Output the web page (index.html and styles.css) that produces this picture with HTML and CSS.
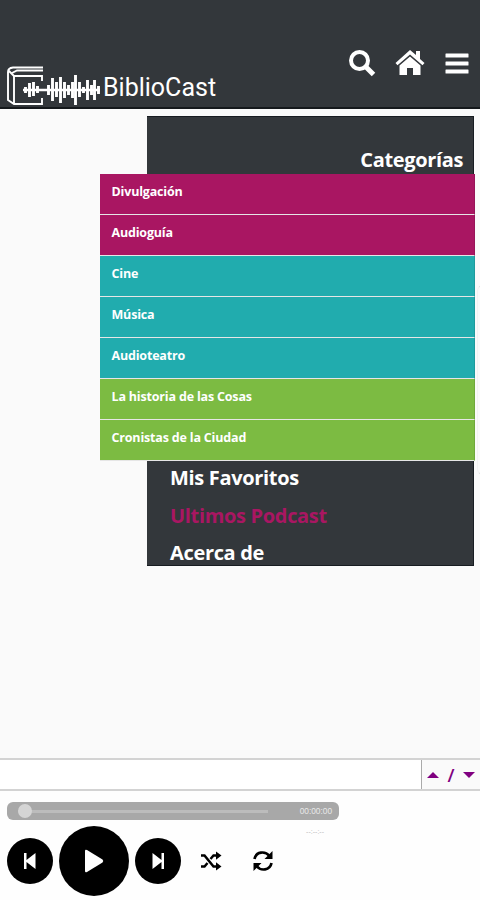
FILE: index.html
```
<!DOCTYPE html>
<html lang="es">
<head>
    <meta charset="UTF-8">
    <meta name="viewport" content="width=device-width, initial-scale=1.0">
    <title>BiblioCast</title>
    <link rel="stylesheet" href="styles.css">
</head>
<body>
    <header class="header">
        <div class="logo">
            <svg width="96" height="42" viewBox="0 0 96 42" fill="none" stroke="#fff">
                <path d="M38 2.500H8Q3 3 3 7V35L9 39H37V33M37 16V11H9V39M9 11L4 6M7 8L12 5.500H38" stroke-width="1.900"/>
                <path d="M18 25H95" stroke-width="2.400"/>
                <path d="M20.500 22V28M24.500 18V32M28.500 17V31M32.500 21V28M43.500 20V30M47.500 13V36M51.500 17V32M55.500 12V38M59.500 17V33M63.500 20V30M67.500 17V33M70.500 10V40M74.500 17V32M78.500 22V28M82.500 15V35M86.500 20V30M89.500 15V35M93.500 21V29" stroke-width="2.900"/>
            </svg>
            <span class="brand">BiblioCast</span>
        </div>
        <nav class="icons">
            <svg width="28" height="28" viewBox="0 0 28 28" fill="none" stroke="#fff">
                <circle cx="11.500" cy="11.500" r="8.500" stroke-width="4"/>
                <path d="M18 18L25.500 25.500" stroke-width="5"/>
            </svg>
            <svg class="home" width="30" height="26" viewBox="0 0 30 26" fill="#fff">
                <path d="M15 0L21 5V1H25V9L29.500 13L27.500 15.300L15 4.500L2.500 15.300L.500 13Z"/>
                <path d="M15 6.500L25.500 15.500V25H18V18H12V25H4.500V15.500Z"/>
            </svg>
            <svg class="bars" width="24" height="22" viewBox="0 0 24 22" fill="#fff">
                <rect x=".5" y=".5" width="23" height="4" rx=".5"/>
                <rect x=".5" y="8.500" width="23" height="4" rx=".5"/>
                <rect x=".5" y="16.500" width="23" height="4" rx=".5"/>
            </svg>
        </nav>
    </header>

    <main class="content">
        <div class="menu">
            <h2 class="title">Categorías</h2>
            <ul class="categories">
                <li class="pink">Divulgación</li>
                <li class="pink">Audioguía</li>
                <li class="teal">Cine</li>
                <li class="teal">Música</li>
                <li class="teal">Audioteatro</li>
                <li class="green">La historia de las Cosas</li>
                <li class="green">Cronistas de la Ciudad</li>
            </ul>
            <ul class="links">
                <li>Mis Favoritos</li>
                <li class="active">Ultimos Podcast</li>
                <li>Acerca de</li>
            </ul>
        </div>
        <div class="edge"></div>
    </main>

    <div class="playlist">
        <div class="track"></div>
        <div class="toggle">
            <i class="up"></i><span>/</span><i class="down"></i>
        </div>
    </div>

    <footer class="player">
        <div class="progress">
            <div class="line"><div class="knob"></div></div>
            <span class="time">00:00:00</span>
        </div>
        <div class="total">--:--:--</div>
        <div class="controls">
            <div class="btn">
                <svg width="14" height="18" viewBox="0 0 14 18" fill="#fff"><path d="M1 1H3.500V8L12.500 1V17L3.500 10V17H1Z"/></svg>
            </div>
            <div class="btn play">
                <svg width="20" height="24" viewBox="0 0 20 24" fill="#fff"><path d="M1 2Q1 0 3 1L18.500 10.500Q20 12 18.500 13.500L3 23Q1 24 1 22Z"/></svg>
            </div>
            <div class="btn">
                <svg width="14" height="18" viewBox="0 0 14 18" fill="#fff"><path d="M13 1H10.500V8L1.500 1V17L10.500 10V17H13Z"/></svg>
            </div>
            <svg class="shuffle" width="22" height="20" viewBox="0 0 22 20">
                <path d="M1 4.500H4.500L13.500 15.500H17M1 15.500H4.500L7.500 12M10.500 8L13.500 4.500H17" fill="none" stroke="#000" stroke-width="2.500"/>
                <path d="M16 .5L21.500 4.500L16 8.800ZM16 11.200L21.500 15.500L16 19.500Z"/>
            </svg>
            <svg class="repeat" width="22" height="22" viewBox="0 0 22 22">
                <path d="M2.500 9C4 1.500 13 .5 17.500 6M19.500 13C18 20.500 9 21.500 4.500 16" fill="none" stroke="#000" stroke-width="2.700"/>
                <path d="M20.500 1V9H12.500ZM1.500 21V13H9.500Z"/>
            </svg>
        </div>
    </footer>
</body>
</html>
```
FILE: styles.css
```
*{
    box-sizing: border-box;
}

body{
    margin: 0;
    height: 900px;
    display: flex;
    flex-direction: column;
    background-color: #fafafa;
    font-family: "Open Sans", "Noto Sans", sans-serif;
    overflow: hidden;
}

ul{
    list-style: none;
    margin: 0;
    padding: 0;
}

svg{
    display: block;
    flex: none;
}

.header{
    height: 109px;
    flex: none;
    display: flex;
    justify-content: space-between;
    background-color: #33373b;
    border-bottom: 2px solid #15191c;
    padding: 0 11px 0 5px;
}

.logo{
    display: flex;
    padding-top: 65px;
}

.brand{
    margin-left: 2px;
    padding-top: 8px;
    font: 25px/30px Roboto, sans-serif;
    color: #fff;
}

.icons{
    display: flex;
    align-items: flex-start;
    padding-top: 49px;
}

.home{
    margin: 1px 0 0 19px;
}

.bars{
    margin: 4px 0 0 20px;
}

.content{
    height: 649px;
    flex: none;
    position: relative;
    padding: 7px 6px 0 147px;
}

.menu{
    height: 450px;
    background-color: #33373b;
    border: 1px solid #171c21;
    border-left: 0;
    color: #fff;
    font-weight: bold;
}

.title{
    margin: 0;
    height: 57px;
    padding: 29px 10px 0 0;
    text-align: right;
    font-size: 20px;
    line-height: 28px;
    letter-spacing: -0.35px;
}

.categories{
    margin: 0 -2px 0 -47px;
}

.categories li{
    height: 41px;
    padding: 8px 11.5px;
    border-bottom: 1px solid #e6e6e6;
    border-right: 1px solid rgba(0, 0, 0, 0.1);
    font-size: 12.5px;
    line-height: 20px;
    letter-spacing: -0.18px;
}

.pink{
    background-color: #a91662;
}

.teal{
    background-color: #21acae;
}

.green{
    background-color: #7cbb42;
}

.links{
    margin-top: -2px;
    padding-left: 23px;
    font-size: 20px;
    line-height: 37.5px;
    letter-spacing: -0.33px;
}

.active{
    color: #a91662;
}

/* next card coming in from the right */
.edge{
    position: absolute;
    left: 477px;
    top: 176px;
    width: 20px;
    height: 190px;
    border: 1px solid #ddd;
    border-left-color: #f2f2f2;
    border-radius: 6px;
}

.playlist{
    height: 33px;
    flex: none;
    display: flex;
    border: 2px solid #d3d3d3;
    border-width: 2px 0;
    background-color: #fff;
}

.track{
    flex: 1;
}

.toggle{
    width: 59px;
    display: flex;
    align-items: center;
    border-left: 1px solid #aaa;
    padding-left: 5px;
    background-color: #fafafa;
    color: #800080;
    font-size: 18px;
    font-weight: 600;
}

.toggle span{
    width: 24px;
    text-align: center;
}

.up, .down{
    border: 6px solid transparent;
}

.up{
    border-top: 0;
    border-bottom-color: #800080;
}

.down{
    border-bottom: 0;
    border-top-color: #800080;
}

.player{
    flex: 1;
    padding: 11px 0 0 7px;
    background-color: #fefefe;
}

.progress{
    width: 332px;
    height: 18px;
    display: flex;
    align-items: center;
    justify-content: space-between;
    padding: 0 7px 0 11px;
    border-radius: 6px;
    background-color: #a8a8a8;
}

.line{
    width: 250px;
    height: 3px;
    display: flex;
    align-items: center;
    background-color: #bcbcbc;
}

.knob{
    width: 14px;
    height: 14px;
    border-radius: 50%;
    background-color: #d5d5d5;
}

.time{
    color: #e8e8e8;
    font: 8.3px/10px "Liberation Sans", sans-serif;
}

.total{
    width: 317px;
    height: 5px;
    padding-top: 7px;
    text-align: right;
    color: #bbb;
    font: 7px/10px "Liberation Sans", sans-serif;
}

.controls{
    display: flex;
    align-items: center;
    margin-top: -1px;
}

.btn{
    width: 46px;
    height: 46px;
    flex: none;
    display: flex;
    align-items: center;
    justify-content: center;
    border-radius: 50%;
    background-color: #000;
}

.play{
    width: 70px;
    height: 70px;
    margin: 0 6px;
}

.shuffle{
    margin-left: 19px;
}

.repeat{
    margin-left: 30px;
}
```
